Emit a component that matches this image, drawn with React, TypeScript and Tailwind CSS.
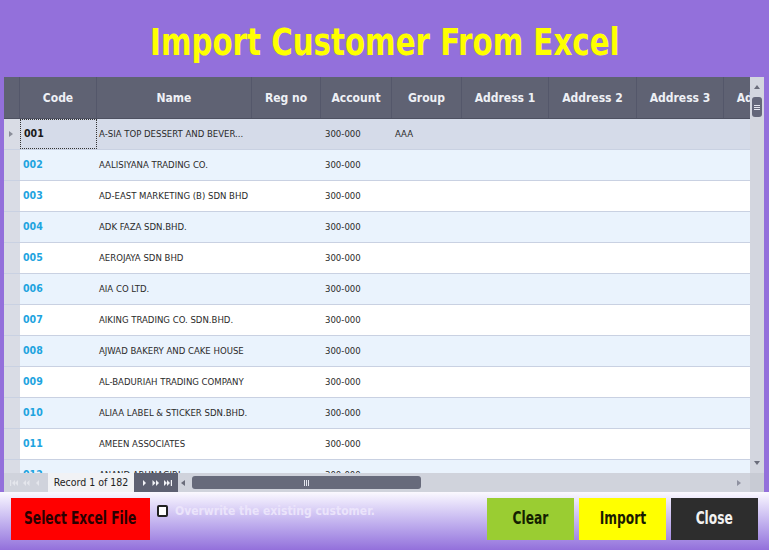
import React from "react";

type Col = { key: string; label: string; w: string };

const columns: Col[] = [
  { key: "code", label: "Code", w: "w-[77px]" },
  { key: "name", label: "Name", w: "w-[155px]" },
  { key: "reg", label: "Reg no", w: "w-[69px]" },
  { key: "account", label: "Account", w: "w-[71px]" },
  { key: "group", label: "Group", w: "w-[70px]" },
  { key: "addr1", label: "Address 1", w: "w-[87px]" },
  { key: "addr2", label: "Address 2", w: "w-[88px]" },
  { key: "addr3", label: "Address 3", w: "w-[87px]" },
  { key: "addr4", label: "Address 4", w: "w-[87px]" },
];

const customers = [
  { code: "001", name: "A-SIA TOP DESSERT AND BEVER...", group: "AAA" },
  { code: "002", name: "AALISIYANA TRADING CO." },
  { code: "003", name: "AD-EAST MARKETING (B) SDN BHD" },
  { code: "004", name: "ADK FAZA SDN.BHD." },
  { code: "005", name: "AEROJAYA SDN BHD" },
  { code: "006", name: "AIA CO LTD." },
  { code: "007", name: "AIKING TRADING CO. SDN.BHD." },
  { code: "008", name: "AJWAD BAKERY AND CAKE HOUSE" },
  { code: "009", name: "AL-BADURIAH TRADING COMPANY" },
  { code: "010", name: "ALIAA LABEL & STICKER SDN.BHD." },
  { code: "011", name: "AMEEN ASSOCIATES" },
  { code: "012", name: "ANAND ARUNAGIRI" },
];

const narrow = "font-['DejaVu_Sans_Condensed','Liberation_Sans',sans-serif]";

// small triangle glyphs for the pager / scrollbars
function Tri({ dir, color }: { dir: "l" | "r" | "u" | "d"; color: string }) {
  const pts = {
    l: "5,1 1,4 5,7",
    r: "1,1 5,4 1,7",
    u: "1,6 4,2 7,6",
    d: "1,2 4,6 7,2",
  }[dir];
  return (
    <svg width="8" height="8" viewBox="0 0 8 8">
      <polygon points={pts} fill={color} />
    </svg>
  );
}

function PagerIcon({ kind, color }: { kind: "first" | "prev2" | "prev" | "next" | "next2" | "last"; color: string }) {
  return (
    <svg width="10" height="8" viewBox="0 0 10 8">
      {kind === "first" && (
        <>
          <rect x="1" y="1" width="1.2" height="6" fill={color} />
          <polygon points="6,1 3,4 6,7" fill={color} />
          <polygon points="9,1 6,4 9,7" fill={color} />
        </>
      )}
      {kind === "prev2" && (
        <>
          <polygon points="5,1 2,4 5,7" fill={color} />
          <polygon points="8.5,1 5.5,4 8.5,7" fill={color} />
        </>
      )}
      {kind === "prev" && <polygon points="6,1 3,4 6,7" fill={color} />}
      {kind === "next" && <polygon points="4,1 7,4 4,7" fill={color} />}
      {kind === "next2" && (
        <>
          <polygon points="1.5,1 4.5,4 1.5,7" fill={color} />
          <polygon points="5,1 8,4 5,7" fill={color} />
        </>
      )}
      {kind === "last" && (
        <>
          <polygon points="1,1 4,4 1,7" fill={color} />
          <polygon points="4,1 7,4 4,7" fill={color} />
          <rect x="7.8" y="1" width="1.2" height="6" fill={color} />
        </>
      )}
    </svg>
  );
}

function Grid() {
  return (
    <div className="ml-[4px] mr-[5px] h-[415px] flex flex-col bg-white overflow-hidden">
      <div className="flex h-[396px]">
        {/* rows + header */}
        <div className="w-[746px] overflow-hidden flex flex-col">
          <div className="flex h-[42px] shrink-0 bg-[#5f6273] border-b border-[#4e5161]">
            <div className="w-[16px] shrink-0 border-r border-[#54576a]" />
            {columns.map((c) => (
              <div
                key={c.key}
                className={`${c.w} shrink-0 flex items-center justify-center border-r border-[#54576a] text-[12px] font-bold text-[#eef0f5] whitespace-nowrap ${narrow}`}
              >
                {c.label}
              </div>
            ))}
          </div>
          <div className="flex flex-col">
            {customers.map((r, i) => {
              const selected = i === 0;
              const bg = selected ? "bg-[#d5dbe9]" : i % 2 === 1 ? "bg-[#eaf3fd]" : "bg-white";
              return (
                <div key={r.code} className={`flex h-[31px] shrink-0 ${bg} border-b border-[#c9d1e2] ${narrow} text-[9.5px]`}>
                  <div className="w-[16px] shrink-0 bg-[#d9dce5] flex items-center justify-center">
                    {selected && <Tri dir="r" color="#8a8d99" />}
                  </div>
                  <div
                    className={`w-[77px] shrink-0 flex items-center pl-[3px] font-bold text-[10.5px] ${
                      selected ? "text-[#1a1a1a] border border-dotted border-[#333]" : "text-[#1ea4df]"
                    }`}
                  >
                    {r.code}
                  </div>
                  <div className="w-[155px] shrink-0 flex items-center pl-[2px] text-[#2a2a2a] whitespace-nowrap overflow-hidden">
                    {r.name}
                  </div>
                  <div className="w-[69px] shrink-0" />
                  <div className="w-[71px] shrink-0 flex items-center pl-[4px] text-[#2a2a2a]">300-000</div>
                  <div className="w-[70px] shrink-0 flex items-center pl-[3px] text-[#2a2a2a]">{r.group ?? ""}</div>
                  <div className="flex-1" />
                </div>
              );
            })}
          </div>
        </div>
        {/* vertical scrollbar */}
        <div className="w-[14px] shrink-0 bg-[#d3d6df] flex flex-col items-center">
          <div className="h-[20px] flex items-center justify-center">
            <Tri dir="u" color="#6a6d7b" />
          </div>
          <div className="w-[10px] h-[20px] rounded-[3px] bg-[#64677a] flex flex-col items-center justify-center gap-[1px]">
            <div className="w-[6px] h-px bg-[#e4e6ee]" />
            <div className="w-[6px] h-px bg-[#e4e6ee]" />
            <div className="w-[6px] h-px bg-[#e4e6ee]" />
          </div>
          <div className="flex-1" />
          <div className="h-[20px] flex items-center justify-center">
            <Tri dir="d" color="#6a6d7b" />
          </div>
        </div>
      </div>
      {/* pager + horizontal scrollbar */}
      <div className={`flex h-[19px] shrink-0 bg-[#d0d3dc] ${narrow}`}>
        <div className="w-[44px] flex items-center justify-center gap-[2px]">
          <PagerIcon kind="first" color="#e4e6ec" />
          <PagerIcon kind="prev2" color="#e4e6ec" />
          <PagerIcon kind="prev" color="#e4e6ec" />
        </div>
        <div className="w-[86px] bg-[#f1f2f5] flex items-center justify-center text-[10.5px] text-[#222]">
          Record 1 of 182
        </div>
        <div className="w-[44px] bg-[#5e6172] flex items-center justify-center gap-[2px]">
          <PagerIcon kind="next" color="#f2f3f7" />
          <PagerIcon kind="next2" color="#f2f3f7" />
          <PagerIcon kind="last" color="#f2f3f7" />
        </div>
        <div className="w-[12px] flex items-center justify-center">
          <Tri dir="l" color="#6a6d7b" />
        </div>
        <div className="flex-1 flex items-center">
          <div className="ml-[2px] w-[229px] h-[13px] rounded-[3px] bg-[#676a7b] flex items-center justify-center gap-[1px]">
            <div className="w-px h-[6px] bg-[#e4e6ee]" />
            <div className="w-px h-[6px] bg-[#e4e6ee]" />
            <div className="w-px h-[6px] bg-[#e4e6ee]" />
          </div>
        </div>
        <div className="w-[20px] flex items-center justify-center">
          <Tri dir="r" color="#8e91a0" />
        </div>
        <div className="w-[14px] bg-[#c8cbd4]" />
      </div>
    </div>
  );
}

export default function App() {
  return (
    <div className="w-[769px] h-[550px] bg-[#9370db] flex flex-col overflow-hidden">
      <div className="h-[77px] shrink-0 flex items-center justify-center pt-[8px]">
        <h1 className={`text-[37px] leading-none font-bold text-[#ffff00] whitespace-nowrap scale-x-[0.88] ${narrow}`}>
          Import Customer From Excel
        </h1>
      </div>
      <Grid />
      {/* footer actions */}
      <div className={`flex-1 bg-gradient-to-b from-[#fbf9ff] to-[#9370db] flex items-start pt-[6px] px-[11px] ${narrow}`}>
        <button className="w-[139px] h-[42px] bg-[#ff0000] flex items-center justify-center">
          <span className="inline-block whitespace-nowrap text-[17px] font-bold text-[#2a0000] scale-x-[0.8]">Select Excel File</span>
        </button>
        <label className="ml-[7px] mt-[4px] flex items-center gap-[7px]">
          <span className="w-[11px] h-[12px] border-2 border-[#222] rounded-[2px] bg-white" />
          <span className="text-[12px] font-bold text-[#ebe4fb] whitespace-nowrap">Overwrite the existing customer.</span>
        </label>
        <div className="flex-1" />
        <div className="flex gap-[5px]">
          <button className="w-[87px] h-[42px] bg-[#9acd32] flex items-center justify-center">
            <span className="inline-block text-[17px] font-bold text-[#142000] scale-x-[0.8]">Clear</span>
          </button>
          <button className="w-[87px] h-[42px] bg-[#ffff00] flex items-center justify-center">
            <span className="inline-block text-[17px] font-bold text-[#1a1a00] scale-x-[0.8]">Import</span>
          </button>
          <button className="w-[87px] h-[42px] bg-[#2d2d2d] flex items-center justify-center">
            <span className="inline-block text-[17px] font-bold text-[#f2f2f2] scale-x-[0.8]">Close</span>
          </button>
        </div>
      </div>
    </div>
  );
}
